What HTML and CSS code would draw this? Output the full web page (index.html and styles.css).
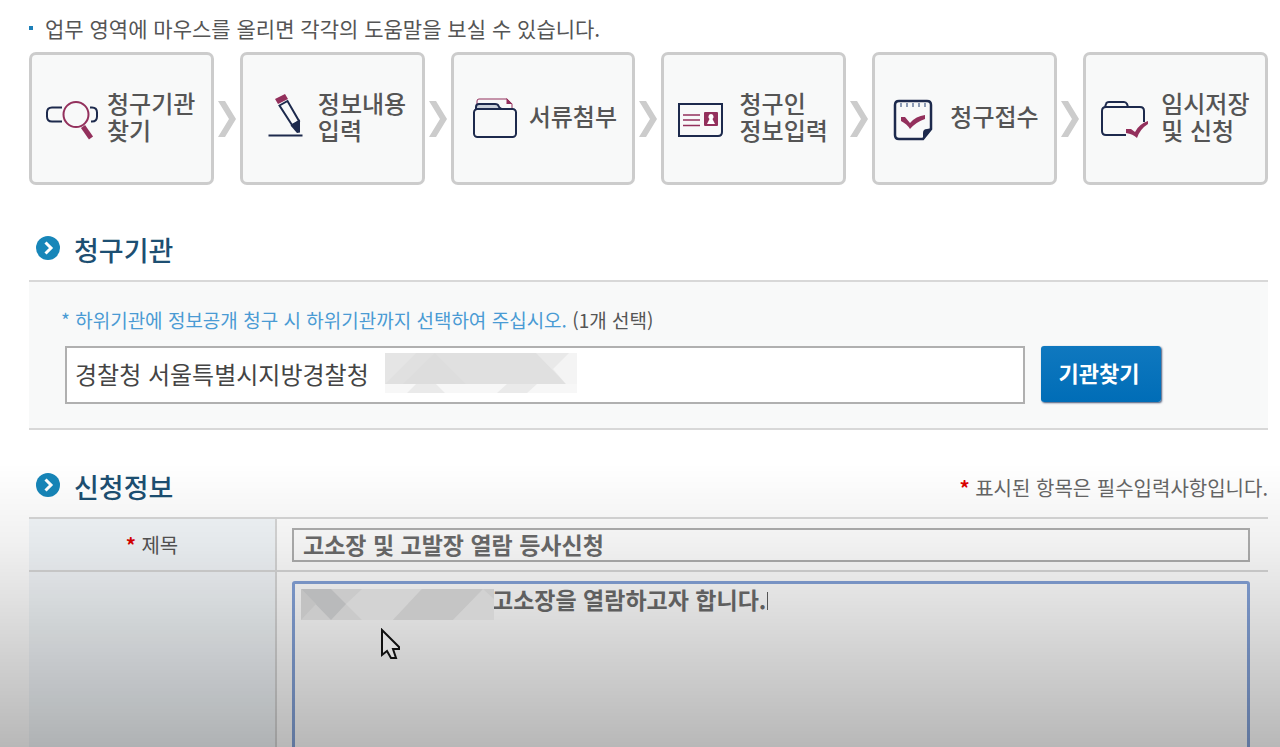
FILE: index.html
```
<!DOCTYPE html>
<html lang="ko">
<head>
  <meta charset="UTF-8">
  <meta name="viewport" content="width=device-width, initial-scale=1.0">
  <title>정보공개 청구신청</title>
  <link rel="stylesheet" href="styles.css">
</head>
<body>
  <main>
    <p class="guide">업무 영역에 마우스를 올리면 각각의 도움말을 보실 수 있습니다.</p>

    <!-- Steps -->
    <ol class="steps">
      <li class="step">
        <svg class="step-icon" viewBox="0 0 60 60">
          <path class="navy" d="M18 19.5H8q-5 0-5 5v4q0 5 5 5h10M46 19.5h2q5 0 5 5v4q0 5-5 5h-1"/>
          <circle class="wine" cx="32" cy="26.500" r="12.500" fill="#fff"/>
          <path class="wine handle" d="M39 38.500L47 50"/>
        </svg>
        <span>청구기관<br>찾기</span>
      </li>
      <li class="arrow"><svg viewBox="0 0 18 36"><path d="M0 0h7l11 18L7 36H0l11-18z"/></svg></li>
      <li class="step">
        <svg class="step-icon" viewBox="0 0 60 60">
          <path class="wine-fill" d="M20 11l10-5 3 5-10 5z"/>
          <path class="navy" d="M24.500 17.500l8-4.500L44 33l-7 4z"/>
          <path class="navy-fill" d="M35.500 37.500l9.500-6v13l-3 .5z"/>
          <path class="navy" d="M13.500 47.500h34"/>
        </svg>
        <span>정보내용<br>입력</span>
      </li>
      <li class="arrow"><svg viewBox="0 0 18 36"><path d="M0 0h7l11 18L7 36H0l11-18z"/></svg></li>
      <li class="step">
        <svg class="step-icon" viewBox="0 0 60 60">
          <path class="wine thin" d="M11 16v-3q0-2 2-2h28l5 5v5"/>
          <path class="wine-fill" d="M40.500 10l6 6h-6z"/>
          <path class="navy tab" d="M10 21v-2q0-3 3-3h16q3 0 3.500 2t3 3z"/>
          <rect class="navy" x="8" y="21" width="42" height="28" rx="3.500" fill="#fff"/>
        </svg>
        <span>서류첨부</span>
      </li>
      <li class="arrow"><svg viewBox="0 0 18 36"><path d="M0 0h7l11 18L7 36H0l11-18z"/></svg></li>
      <li class="step">
        <svg class="step-icon" viewBox="0 0 60 60">
          <path class="navy" d="M3 16h43v28q0 4-4 4H3z"/>
          <path class="wine lines" d="M7 27h17M7 32h17M7 37.500h17"/>
          <rect class="wine-fill" x="28" y="24" width="14" height="14" rx="1"/>
          <path d="M35 26a2.800 2.800 0 0 1 1.500 5l2.500 5h-8l2.500-5a2.800 2.800 0 0 1 1.500-5z" fill="#fff"/>
        </svg>
        <span>청구인<br>정보입력</span>
      </li>
      <li class="arrow"><svg viewBox="0 0 18 36"><path d="M0 0h7l11 18L7 36H0l11-18z"/></svg></li>
      <li class="step">
        <svg class="step-icon" viewBox="0 0 60 60">
          <path class="navy heavy" d="M12 13h28q4 0 4 4v24l-8 10H12q-4 0-4-4V17q0-4 4-4z"/>
          <path class="navy-fill" d="M45 40l-9 12v-7q0-4 4-4z"/>
          <path class="ticks" d="M14 15v4M20 15v4M26 15v4M32 15v4M38 15v4"/>
          <path class="wine-fill" d="M14 29h4l5 6q6-7 15-8v4q-9 3-15 10-3-5-9-8z"/>
        </svg>
        <span>청구접수</span>
      </li>
      <li class="arrow"><svg viewBox="0 0 18 36"><path d="M0 0h7l11 18L7 36H0l11-18z"/></svg></li>
      <li class="step">
        <svg class="step-icon" viewBox="0 0 60 60">
          <path class="navy" d="M28 47H8q-4 0-4-4V23q0-4 4-4h34q4 0 4 4v11"/>
          <path class="navy" d="M7 19l1-3q.5-2 3-2h15q2 0 3 2l1 3"/>
          <path class="wine-fill" d="M28 41h5l4 3q4-8 13-11v3q-8 5-11 14-4-4-11-5z"/>
        </svg>
        <span>임시저장<br>및 신청</span>
      </li>
    </ol>

    <!-- Agency -->
    <section class="agency">
      <div class="section-head">
        <svg class="bullet" viewBox="0 0 24 24"><circle cx="12" cy="12" r="12"/><path d="M9.500 6.500L15 12l-5.500 5.500"/></svg>
        <h2>청구기관</h2>
      </div>
      <div class="panel">
        <p class="hint"><label for="agency">* 하위기관에 정보공개 청구 시 하위기관까지 선택하여 주십시오.</label> <span>(1개 선택)</span></p>
        <div class="search">
          <div class="field">
            <input type="text" id="agency" value="경찰청 서울특별시지방경찰청">
            <svg class="mosaic mosaic-agency" viewBox="0 0 192 40">
              <path fill="#f7f7f7" d="M0 0h192v40H0z"/>
              <path fill="#e0e0e0" d="M0 0h192v31H0z"/>
              <path fill="#e5e5e5" d="M0 0h31L0 31z"/>
              <path fill="#dddddd" d="M18 31L50 0l31 31z"/>
              <path fill="#e9e9e9" d="M151 0h41v31h-11z"/>
              <path fill="#f4f4f4" d="M192 0v31h-11l-13-15L184 0z"/>
              <path fill="#eaeaea" d="M22 40l9-9h20l9 9zM112 40l10-9h30l-10 9z"/>
            </svg>
          </div>
          <button type="button">기관찾기</button>
        </div>
      </div>
    </section>

    <!-- Application -->
    <section class="application">
      <div class="section-head">
        <svg class="bullet" viewBox="0 0 24 24"><circle cx="12" cy="12" r="12"/><path d="M9.500 6.500L15 12l-5.500 5.500"/></svg>
        <h2>신청정보</h2>
        <p class="required-note"><b class="star">*</b> 표시된 항목은 필수입력사항입니다.</p>
      </div>
      <table>
        <tr>
          <th scope="row"><b class="star">*</b> <label for="subject">제목</label></th>
          <td><input type="text" id="subject" value="고소장 및 고발장 열람 등사신청"></td>
        </tr>
        <tr>
          <th></th>
          <td>
            <div class="field">
              <textarea aria-label="청구내용" rows="8">고소장을 열람하고자 합니다.</textarea>
              <svg class="mosaic mosaic-content" viewBox="0 0 193 31">
                <path fill="#cacaca" d="M0 0h193v31H0z"/>
                <path fill="#b9babb" d="M0 0h30l15 15-15 16L0 0z"/>
                <path fill="#c2c2c2" d="M0 0l15 15L0 31z"/>
                <path fill="#d3d3d3" d="M61 0h60L92 31H61L45 15z"/>
                <path fill="#c5c5c5" d="M121 0h61l-30 31H92z"/>
                <path fill="#d2d2d2" d="M182 0l11 10v21h-41z"/>
              </svg>
              <span class="caret"></span>
              <svg class="pointer" viewBox="0 0 22 32"><path d="M2 2v25l5-4 4 7h5l-3-9h6v-2z"/></svg>
            </div>
          </td>
        </tr>
      </table>
    </section>
  </main>
</body>
</html>
```
FILE: styles.css
```
* {
  box-sizing: border-box;
}
body {
  margin: 0;
  height: 100vh;
  overflow: hidden;
  background: #fff;
  color: #555;
  font-family: "Noto Sans CJK KR", sans-serif;
  font-size: 20px;
}
/* dimming towards the bottom of the window */
body::after {
  content: "";
  position: fixed;
  inset: 0;
  background: linear-gradient(transparent 62%, rgba(0, 0, 0, 0.06) 73%, rgba(0, 0, 0, 0.28) 100%);
  pointer-events: none;
}
main {
  padding: 12px 12px 0 29px;
}
h2, p, ol {
  margin: 0;
  padding: 0;
}
input, textarea, button {
  font-family: inherit;
}

.guide {
  display: flex;
  align-items: center;
  gap: 12px;
  margin-bottom: 8px;
  font-size: 21px;
  line-height: 32px;
}
.guide::before {
  content: "";
  width: 4px;
  height: 4px;
  background: #1c7fb8;
}

/* Steps */
.steps {
  display: flex;
  list-style: none;
}
.step {
  display: flex;
  flex: 1;
  align-items: center;
  gap: 3px;
  height: 133px;
  padding: 0 0 2px 12px;
  border: 3px solid #ccc;
  border-radius: 7px;
  background: #f8f9f9;
  font-size: 24px;
  font-weight: 500;
  line-height: 27px;
  white-space: nowrap;
}
.step span {
  margin-bottom: 4px;
}
.step-icon {
  flex: none;
  width: 60px;
  height: 60px;
}
.arrow {
  display: flex;
  align-items: center;
  justify-content: center;
  width: 26px;
}
.arrow svg {
  width: 18px;
  height: 36px;
  fill: #ccc;
}
.navy, .wine {
  fill: none;
  stroke: #1d2a4d;
  stroke-width: 2;
}
.wine {
  stroke: #93305c;
}
.heavy {
  stroke-width: 2.5;
}
.thin {
  stroke-width: 1;
}
.handle {
  stroke-width: 5;
}
.lines {
  stroke-width: 1.5;
}
.tab {
  fill: #c9d0da;
}
.ticks {
  stroke: #8c9bb5;
  stroke-width: 2;
}
.navy-fill {
  fill: #1d2a4d;
}
.wine-fill {
  fill: #93305c;
}

/* Sections */
.agency {
  margin-top: 45px;
}
.application {
  margin-top: 37px;
}
.section-head {
  display: flex;
  align-items: center;
  padding: 0 0 10px 7px;
}
.section-head h2 {
  margin-left: 14px;
  color: #1d4f72;
  font-size: 27px;
  font-weight: 500;
  line-height: 40px;
}
.bullet {
  width: 24px;
  height: 24px;
  margin-bottom: 4px;
  fill: #1786b9;
}
.bullet path {
  fill: none;
  stroke: #fff;
  stroke-width: 3;
}
.required-note {
  margin-left: auto;
  color: #666;
}
.star {
  color: #d00;
}

.panel {
  padding: 26px 107px 24px 32px;
  border: solid #d8d8d8;
  border-width: 2px 0;
  background: #f8f9f9;
}
.hint {
  margin-bottom: 14px;
  font-size: 19px;
  line-height: 24px;
}
.hint label {
  color: #4a9bd4;
}
.search {
  display: flex;
  gap: 16px;
  padding-left: 4px;
}
.field {
  position: relative;
  flex: 1;
}
#agency {
  display: block;
  width: 100%;
  height: 58px;
  padding: 0 8px 4px;
  border: 2px solid #b0b0b0;
  color: #444;
  font-size: 24px;
}
.search button {
  width: 120px;
  height: 56px;
  padding: 0 4px 4px 0;
  border: 0;
  border-radius: 3px;
  background: linear-gradient(#0f78bf, #006db7);
  box-shadow: 1px 1px 2px #457;
  color: #fff;
  font-size: 22px;
  font-weight: bold;
}

/* Form table */
table {
  width: 100%;
  border-collapse: collapse;
  border-top: 2px solid #d8d8d8;
}
th {
  width: 247px;
  border-right: 2px solid #d8d8d8;
  background: #f3f7fa;
  font-weight: normal;
}
td {
  padding: 9px 18px 8px 15px;
}
tr {
  border-bottom: 2px solid #d8d8d8;
}
#subject {
  display: block;
  width: 100%;
  height: 34px;
  padding: 0 9px 2px;
  border: 2px solid #b0b0b0;
  background: transparent;
  color: #6c6c6c;
  font-size: 23px;
  font-weight: bold;
}
textarea {
  display: block;
  width: 100%;
  padding: 1px 9px;
  border: 3px solid #86a4da;
  border-radius: 3px;
  background: transparent;
  color: #6c6c6c;
  font-size: 23px;
  font-weight: bold;
  line-height: 28px;
  text-indent: 188px;
  resize: none;
}

/* Things lying over the fields */
.mosaic, .caret, .pointer {
  position: absolute;
  z-index: 1;
}
.mosaic-agency {
  top: 7px;
  left: 320px;
  width: 192px;
  height: 40px;
}
.mosaic-content {
  top: 8px;
  left: 9px;
  width: 193px;
  height: 31px;
}
.caret {
  top: 11px;
  left: 475px;
  width: 1px;
  height: 18px;
  background: #555;
}
.pointer {
  top: 47px;
  left: 88px;
  width: 22px;
  height: 32px;
  fill: #ddd;
  stroke: #111;
  stroke-width: 2;
}
```
